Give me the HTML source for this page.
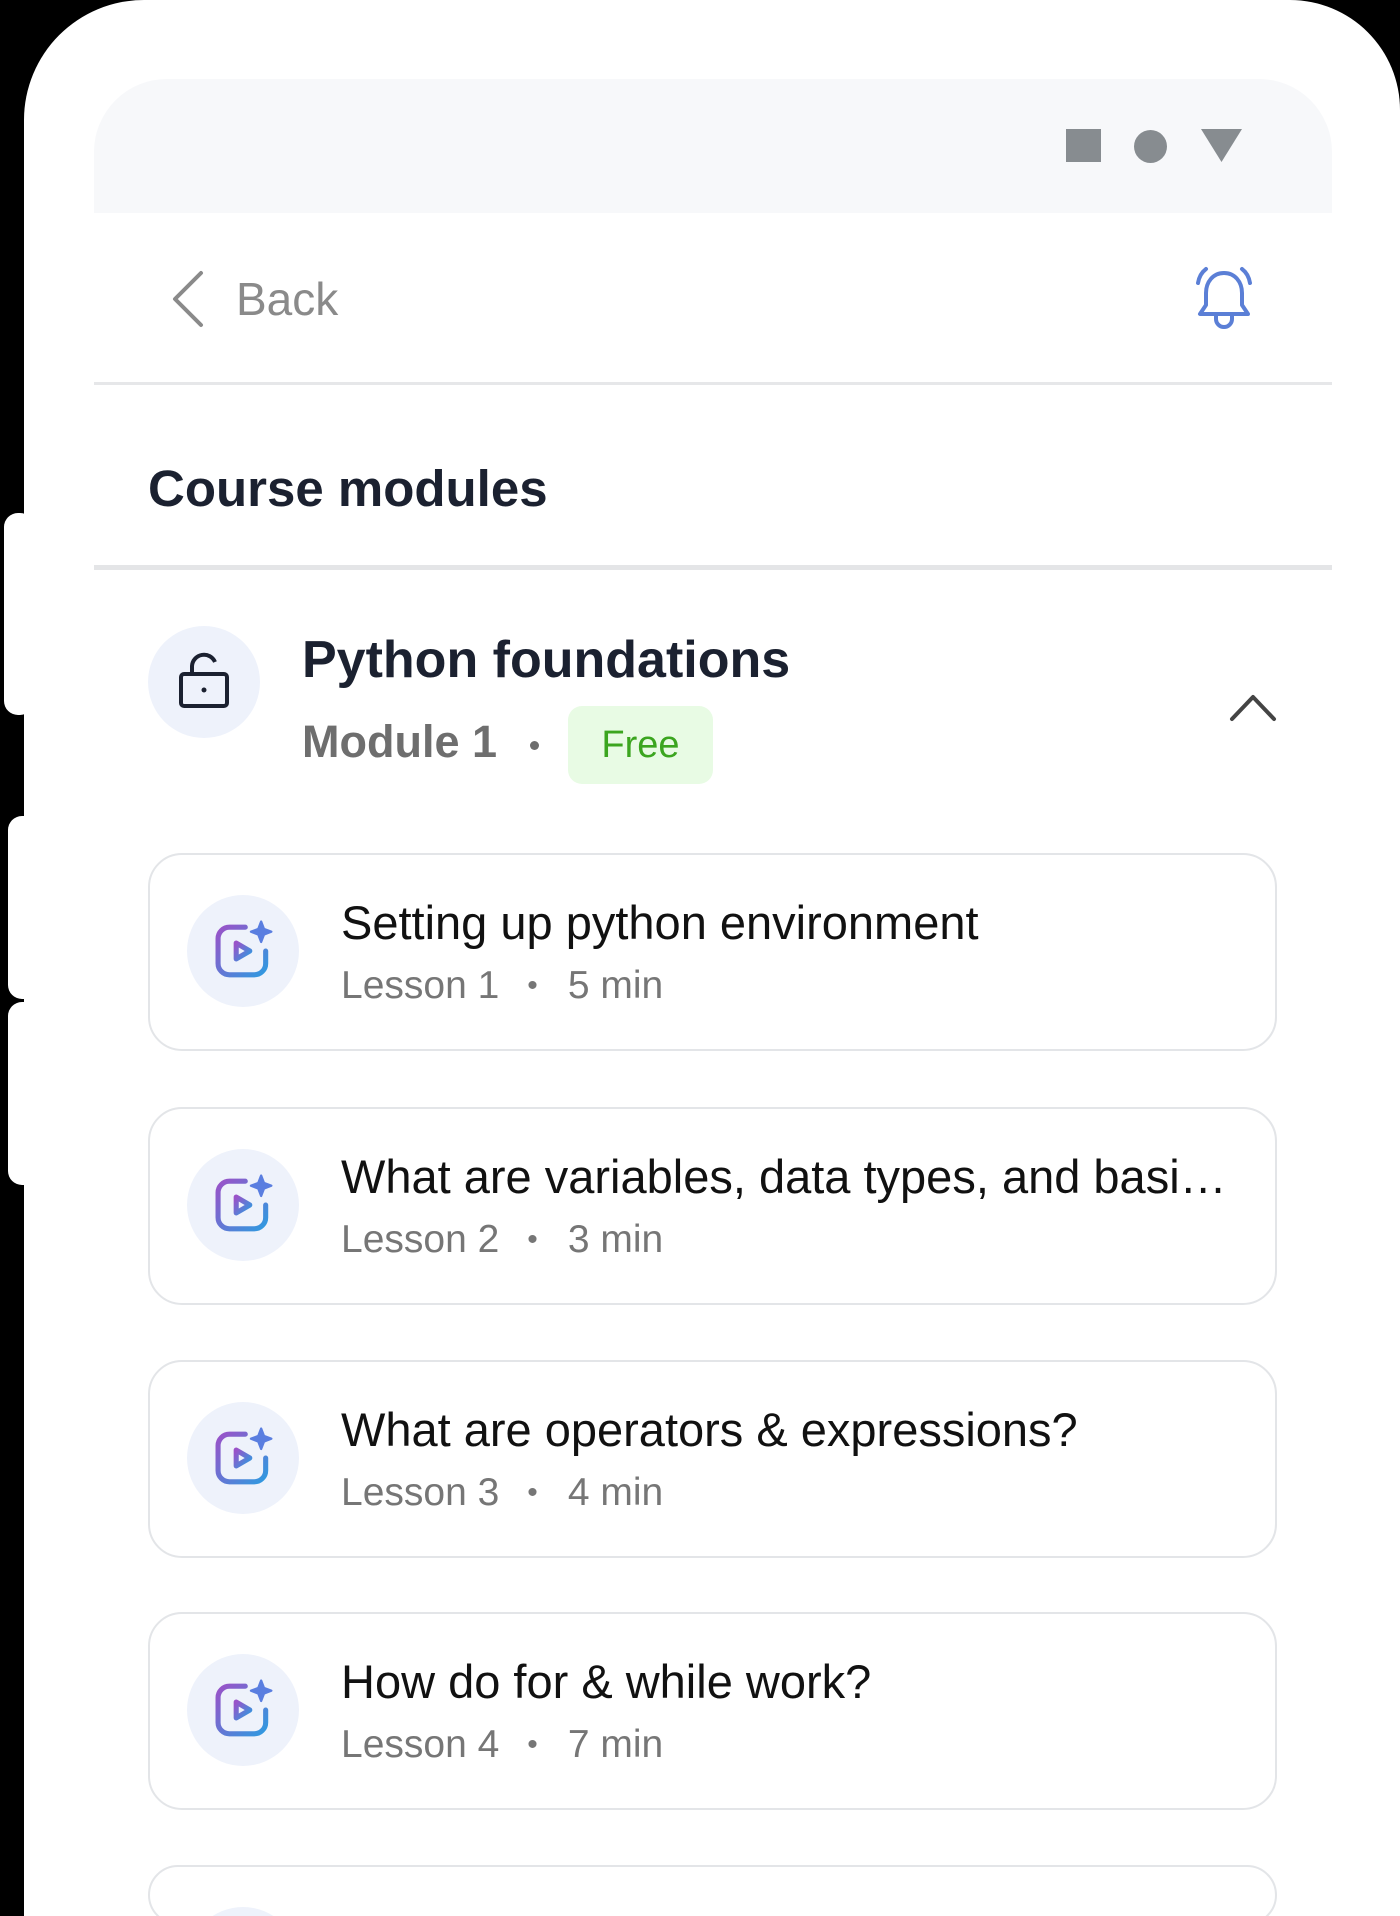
<!DOCTYPE html>
<html><head><meta charset="utf-8"><style>
*{margin:0;padding:0;box-sizing:border-box}
body{width:1400px;height:1916px;background:#000;position:relative;overflow:hidden;font-family:"Liberation Sans",Arial,sans-serif}
.phone{position:absolute;left:24px;top:0;width:1376px;height:1916px;background:#fff;border-radius:120px 110px 0 0}
.btn{position:absolute;left:4px;width:30px;background:#fff;border-radius:14px}
.screen{position:absolute;left:94px;top:79px;width:1238px;height:1837px;background:#fff;border-radius:73px 73px 0 0;overflow:hidden}
.status{position:absolute;left:0;top:0;width:100%;height:134px;background:#f7f8fa}
.abs{position:absolute}
.card{position:absolute;left:54px;width:1129px;height:198px;border:2px solid #e3e5e8;border-radius:34px;background:#fff}
.ic{position:absolute;left:37px;top:40px;width:112px;height:112px;border-radius:50%;background:#eef2fb}
.ic svg{position:absolute;left:22px;top:22px}
.t{position:absolute;left:191px;top:40px;font-size:47px;color:#111;white-space:nowrap;width:900px;overflow:hidden;text-overflow:ellipsis;line-height:56px}
.s{position:absolute;left:191px;top:108px;font-size:39px;color:#767676;line-height:46px;white-space:nowrap}
.s b{font-weight:normal;display:inline-block;margin:0 30px 0 28px;font-size:30px;vertical-align:3px}
</style></head><body>
<div class="btn" style="top:513px;height:202px"></div>
<div class="btn" style="top:816px;height:183px;left:8px"></div>
<div class="btn" style="top:1002px;height:183px;left:8px"></div>
<div class="phone"></div>
<div class="screen">
 <div class="status">
  <div class="abs" style="left:972px;top:50px;width:35px;height:33px;background:#878c90"></div>
  <div class="abs" style="left:1040px;top:51px;width:33px;height:33px;border-radius:50%;background:#878c90"></div>
  <svg class="abs" style="left:1107px;top:50px" width="41" height="33"><polygon points="0,0 41,0 20.5,33" fill="#878c90"/></svg>
 </div>
 <svg class="abs" style="left:75px;top:190px" width="40" height="60"><polyline points="32,4 6,30 32,56" fill="none" stroke="#8a8a8a" stroke-width="4" stroke-linecap="round" stroke-linejoin="round"/></svg>
 <div class="abs" style="left:142px;top:192px;font-size:46px;color:#8a8a8a;line-height:56px">Back</div>
 <svg class="abs" style="left:1096px;top:184px" width="68" height="72" viewBox="0 0 68 72" fill="none" stroke="#5b7fd6" stroke-width="4" stroke-linecap="round" stroke-linejoin="round">
  <path d="M34 10c-11 0-18 9-18 20v12l-6 9h48l-6-9V30c0-11-7-20-18-20z"/>
  <path d="M26 51v5a8 8 0 0 0 16 0v-5"/>
  <path d="M8 20c1-6 4-11 8-14"/><path d="M60 20c-1-6-4-11-8-14"/>
 </svg>
 <div class="abs" style="left:0;top:303px;width:100%;height:3px;background:#e6e7e9"></div>
 <div class="abs" style="left:54px;top:378px;font-size:51px;font-weight:bold;color:#1b2130;line-height:64px">Course modules</div>
 <div class="abs" style="left:0;top:486px;width:100%;height:5px;background:#e4e5e7"></div>
 <div class="abs" style="left:54px;top:547px;width:112px;height:112px;border-radius:50%;background:#eef2fb"></div>
 <svg class="abs" style="left:80px;top:568px" width="60" height="64" viewBox="0 0 60 64" fill="none" stroke="#1b2130" stroke-width="4" stroke-linejoin="round">
  <rect x="7" y="27" width="46" height="32" rx="3"/>
  <path d="M18 27V19a12 12 0 0 1 23-4"/>
  <circle cx="30" cy="43" r="2.5" fill="#1b2130" stroke="none"/>
 </svg>
 <div class="abs" style="left:208px;top:549px;font-size:52px;font-weight:bold;color:#1b2130;line-height:64px;white-space:nowrap">Python foundations</div>
 <div class="abs" style="left:208px;top:635px;font-size:45px;font-weight:bold;color:#6e6e6e;line-height:56px;white-space:nowrap">Module 1</div>
 <div class="abs" style="left:436px;top:662px;width:9px;height:9px;border-radius:50%;background:#6e6e6e"></div>
 <div class="abs" style="left:474px;top:627px;width:145px;height:78px;border-radius:14px;background:#e8fbe4;color:#3ba51f;font-size:38px;line-height:78px;text-align:center">Free</div>
 <svg class="abs" style="left:1134px;top:610px" width="50" height="34"><polyline points="4,30 25,8 46,30" fill="none" stroke="#444" stroke-width="4" stroke-linecap="round" stroke-linejoin="round"/></svg>

 <svg width="0" height="0" style="position:absolute"><defs><linearGradient id="g" x1="0" y1="0" x2="1" y2="1"><stop offset="0" stop-color="#9a52c8"/><stop offset="1" stop-color="#2f9ae0"/></linearGradient></defs></svg>
 <div class="card" style="top:774px"><div class="ic"><svg width="68" height="68" viewBox="0 0 60 60" fill="none" stroke="url(#g)" stroke-width="4.5" stroke-linecap="round" stroke-linejoin="round"><path d="M32 9H18a10 10 0 0 0-10 10v22a10 10 0 0 0 10 10h22a10 10 0 0 0 10-10V30"/><path d="M24 23v14l12-7z"/><path d="M46 4l2.5 6.5L55 13l-6.5 2.5L46 22l-2.5-6.5L37 13l6.5-2.5z" fill="#5a7ee0" stroke="#5a7ee0" stroke-width="2"/></svg></div><div class="t">Setting up python environment</div><div class="s">Lesson 1<b>•</b>5 min</div></div>
 <div class="card" style="top:1028px"><div class="ic"><svg width="68" height="68" viewBox="0 0 60 60" fill="none" stroke="url(#g)" stroke-width="4.5" stroke-linecap="round" stroke-linejoin="round"><path d="M32 9H18a10 10 0 0 0-10 10v22a10 10 0 0 0 10 10h22a10 10 0 0 0 10-10V30"/><path d="M24 23v14l12-7z"/><path d="M46 4l2.5 6.5L55 13l-6.5 2.5L46 22l-2.5-6.5L37 13l6.5-2.5z" fill="#5a7ee0" stroke="#5a7ee0" stroke-width="2"/></svg></div><div class="t" style="width:893px">What are variables, data types, and basic syntax?</div><div class="s">Lesson 2<b>•</b>3 min</div></div>
 <div class="card" style="top:1281px"><div class="ic"><svg width="68" height="68" viewBox="0 0 60 60" fill="none" stroke="url(#g)" stroke-width="4.5" stroke-linecap="round" stroke-linejoin="round"><path d="M32 9H18a10 10 0 0 0-10 10v22a10 10 0 0 0 10 10h22a10 10 0 0 0 10-10V30"/><path d="M24 23v14l12-7z"/><path d="M46 4l2.5 6.5L55 13l-6.5 2.5L46 22l-2.5-6.5L37 13l6.5-2.5z" fill="#5a7ee0" stroke="#5a7ee0" stroke-width="2"/></svg></div><div class="t">What are operators &amp; expressions?</div><div class="s">Lesson 3<b>•</b>4 min</div></div>
 <div class="card" style="top:1533px"><div class="ic"><svg width="68" height="68" viewBox="0 0 60 60" fill="none" stroke="url(#g)" stroke-width="4.5" stroke-linecap="round" stroke-linejoin="round"><path d="M32 9H18a10 10 0 0 0-10 10v22a10 10 0 0 0 10 10h22a10 10 0 0 0 10-10V30"/><path d="M24 23v14l12-7z"/><path d="M46 4l2.5 6.5L55 13l-6.5 2.5L46 22l-2.5-6.5L37 13l6.5-2.5z" fill="#5a7ee0" stroke="#5a7ee0" stroke-width="2"/></svg></div><div class="t">How do for &amp; while work?</div><div class="s">Lesson 4<b>•</b>7 min</div></div>
 <div class="card" style="top:1786px;height:60px"><div class="ic"></div></div>
</div>
</body></html>
